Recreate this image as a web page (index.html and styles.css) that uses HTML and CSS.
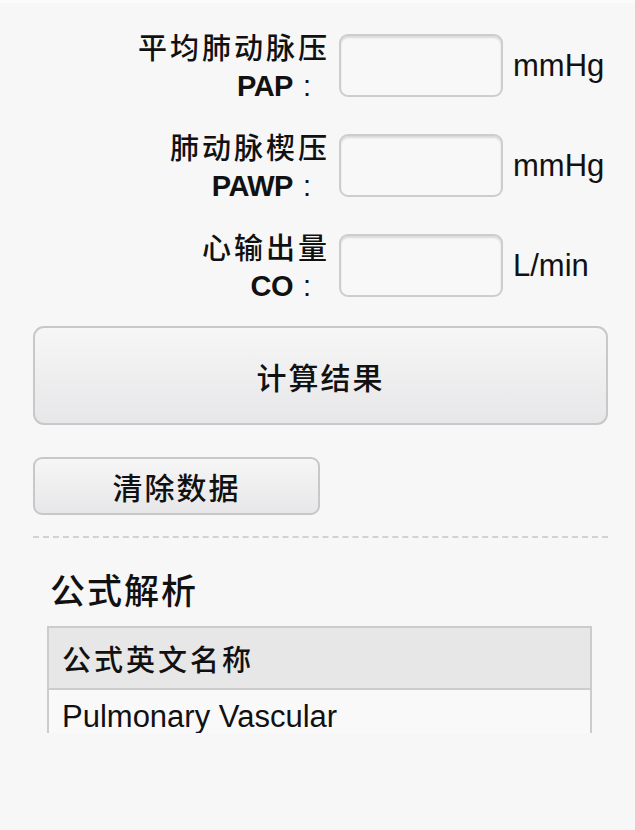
FILE: index.html
```html
<!DOCTYPE html>
<html lang="zh-CN">
<head>
<meta charset="utf-8">
<title>肺血管阻力</title>
<link rel="stylesheet" href="styles.css">
</head>
<body>
<div class="topband"></div>
<div class="page">
  <div class="form">
    <div class="row">
      <div class="label"><div class="cn">平均肺动脉压</div><div class="en"><b>PAP</b><span class="colon">:</span></div></div>
      <div class="input"></div>
      <div class="unit">mmHg</div>
    </div>
    <div class="row">
      <div class="label"><div class="cn">肺动脉楔压</div><div class="en"><b>PAWP</b><span class="colon">:</span></div></div>
      <div class="input"></div>
      <div class="unit">mmHg</div>
    </div>
    <div class="row">
      <div class="label"><div class="cn">心输出量</div><div class="en"><b>CO</b><span class="colon">:</span></div></div>
      <div class="input"></div>
      <div class="unit">L/min</div>
    </div>
  </div>
  <div class="btn btn-main">计算结果</div>
  <div class="btn btn-clear">清除数据</div>
  <div class="divider"></div>
  <h2 class="title">公式解析</h2>
  <div class="tablewrap">
    <div class="thead">公式英文名称</div>
    <div class="tbody">Pulmonary Vascular</div>
  </div>
</div>
</body>
</html>
```
FILE: styles.css
```css
html, body {
  margin: 0;
  padding: 0;
  background: #f7f7f7;
}
body {
  font-family: "Liberation Sans", "Noto Sans CJK SC", sans-serif;
  color: #111;
  width: 635px;
  height: 830px;
  overflow: hidden;
}
.topband {
  height: 3px;
  background: #fbfbfb;
}
.page {
  padding: 31px 27px 0 33px;
}
.form {
  display: flex;
  flex-direction: column;
  gap: 37px;
}
.row {
  display: flex;
  align-items: center;
  height: 63px;
  margin-left: -33px;
}
.label {
  width: 327px;
  text-align: right;
  margin-right: 12px;
}
.cn {
  font-family: "Noto Sans CJK SC", sans-serif;
  font-weight: 500;
  font-size: 29px;
  line-height: 40px;
  letter-spacing: 3px;
  margin-right: -3px;
}
.en {
  font-size: 29px;
  line-height: 40px;
  font-family: "Liberation Sans", sans-serif;
}
.en b {
  font-weight: bold;
  letter-spacing: -0.5px;
}
.colon {
  display: inline-block;
  margin: 0 16px 0 10px;
}
.input {
  width: 160px;
  height: 59px;
  border: 2px solid #cdcdcd;
  border-radius: 9px;
  background: #f8f8f8;
  box-shadow: inset 0 2px 2px rgba(0,0,0,0.12);
  flex: none;
}
.unit {
  margin-left: 10px;
  font-size: 31px;
  line-height: 40px;
}
.btn {
  box-sizing: border-box;
  display: flex;
  align-items: center;
  justify-content: center;
  border: 2px solid #c8c8c8;
  border-radius: 11px;
  background: linear-gradient(#f6f6f6, #e7e7e9);
  font-family: "Noto Sans CJK SC", sans-serif;
  font-weight: 500;
  font-size: 30px;
  letter-spacing: 2px;
}
.btn-main {
  margin-top: 29px;
  height: 99px;
}
.btn-clear {
  margin-top: 32px;
  width: 287px;
  height: 58px;
  border-radius: 9px;
}
.divider {
  margin-top: 21px;
  border-top: 2px dashed #d2d2d2;
}
.title {
  margin: 28px 0 0 17px;
  font-family: "Noto Sans CJK SC", sans-serif;
  font-weight: 500;
  font-size: 35px;
  line-height: 46px;
  letter-spacing: 2px;
}
.tablewrap {
  margin: 14px 16px 0 14px;
  height: 107px;
  overflow: hidden;
  border: 2px solid #cccccc;
  border-bottom: none;
  box-sizing: border-box;
  background: #f9f9f9;
}
.thead {
  height: 62px;
  box-sizing: border-box;
  background: #e7e7e7;
  border-bottom: 2px solid #cccccc;
  padding-left: 13px;
  display: flex;
  align-items: center;
  font-family: "Noto Sans CJK SC", sans-serif;
  font-weight: 500;
  font-size: 29px;
  letter-spacing: 3px;
}
.tbody {
  padding: 11px 13px 0;
  font-size: 31px;
  line-height: 32px;
  white-space: nowrap;
}
```
